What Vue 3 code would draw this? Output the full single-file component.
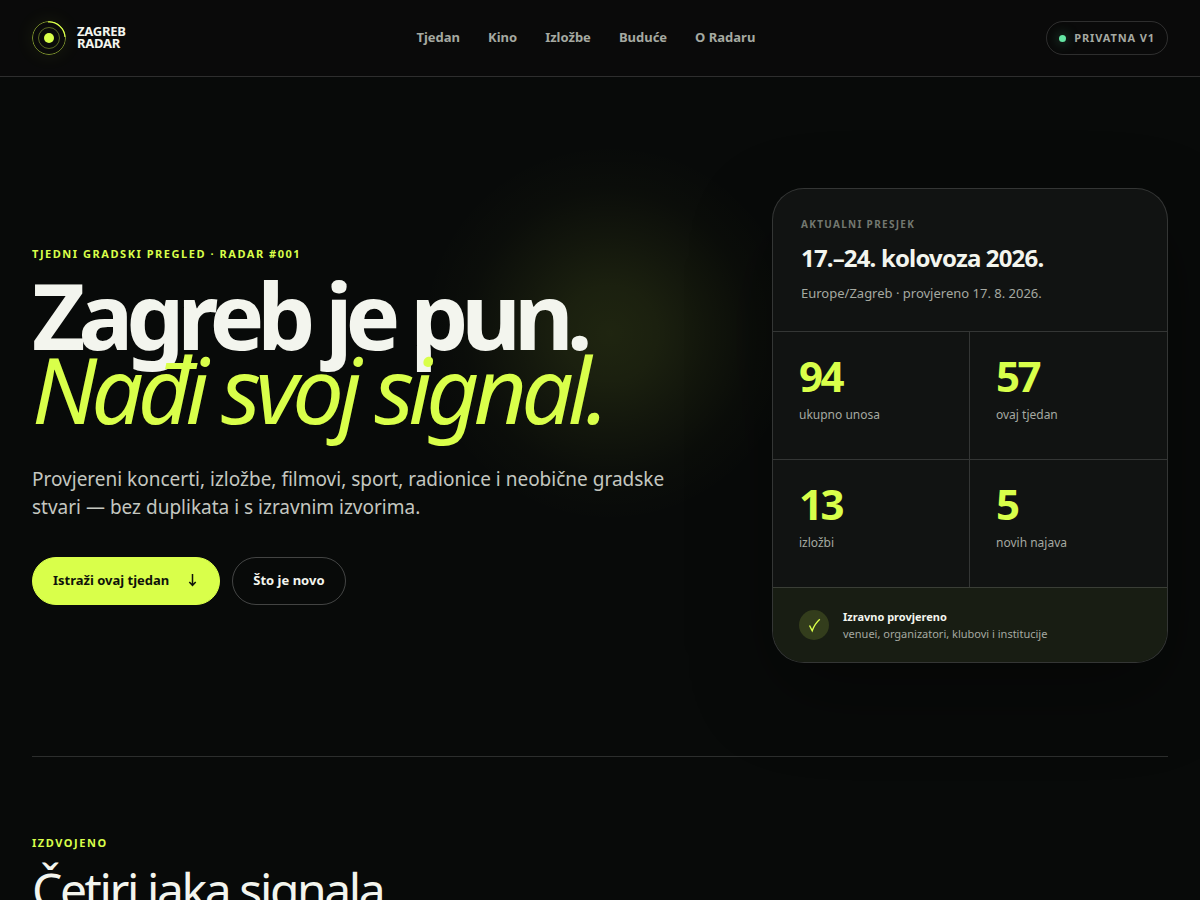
<script setup>
const links = [
  { label: 'Tjedan', href: '#tjedan' },
  { label: 'Kino', href: '#kino' },
  { label: 'Izložbe', href: '#izlozbe' },
  { label: 'Buduće', href: '#buduce' },
  { label: 'O Radaru', href: '#o-radaru' },
]

const stats = [
  { value: 94, label: 'ukupno unosa' },
  { value: 57, label: 'ovaj tjedan' },
  { value: 13, label: 'izložbi' },
  { value: 5, label: 'novih najava' },
]
</script>

<template>
  <div class="page">
    <header class="topbar">
      <a class="brand" href="#vrh">
        <svg class="mark" viewBox="0 0 34 34" aria-hidden="true">
          <circle class="ring" cx="17" cy="17" r="16.5" />
          <circle class="ring inner" cx="17" cy="17" r="10.5" />
          <path class="sweep" d="M16 1A16 16 0 0 1 33 16" />
          <circle class="core" cx="17" cy="17" r="5" />
        </svg>
        <span class="brand-name">ZAGREB<br />RADAR</span>
      </a>
      <nav class="nav" aria-label="Glavna navigacija">
        <a v-for="link in links" :key="link.href" :href="link.href">{{ link.label }}</a>
      </nav>
      <div class="status"><span class="status-dot"></span>PRIVATNA V1</div>
    </header>

    <main class="content">
      <section id="vrh" class="hero">
        <div class="intro">
          <p class="eyebrow">TJEDNI GRADSKI PREGLED · RADAR #001</p>
          <h1>Zagreb je pun.<br /><em>Nađi svoj signal.</em></h1>
          <p class="lead">
            Provjereni koncerti, izložbe, filmovi, sport, radionice i neobične gradske stvari — bez
            duplikata i s izravnim izvorima.
          </p>
          <div class="actions">
            <a class="button primary" href="#tjedan">
              Istraži ovaj tjedan
              <svg class="arrow" viewBox="0 0 12 14" aria-hidden="true">
                <path d="M5.5 1V12M2.3 9L5.5 12.3L8.7 9" />
              </svg>
            </a>
            <a class="button" href="#novo">Što je novo</a>
          </div>
        </div>

        <aside class="card" aria-label="Aktualni presjek">
          <div class="card-head">
            <p class="card-label">AKTUALNI PRESJEK</p>
            <h2>17.–24. kolovoza 2026.</h2>
            <p class="card-meta">Europe/Zagreb · provjereno 17. 8. 2026.</p>
          </div>
          <div class="stats">
            <div v-for="stat in stats" :key="stat.label" class="stat">
              <strong>{{ stat.value }}</strong>
              <span>{{ stat.label }}</span>
            </div>
          </div>
          <div class="card-foot">
            <svg class="check" viewBox="0 0 30 30" aria-hidden="true">
              <circle cx="15" cy="15" r="15" />
              <path d="M10.5 15.5L13.2 20.8C14.6 16.6 17 12.6 20.8 9.2" />
            </svg>
            <p><strong>Izravno provjereno</strong><br />venuei, organizatori, klubovi i institucije</p>
          </div>
        </aside>
      </section>

      <section class="featured">
        <p class="eyebrow">IZDVOJENO</p>
        <h2>Četiri jaka signala</h2>
      </section>
    </main>
  </div>
</template>

<style>
body {
  margin: 0;
  background: #080a09;
}
</style>

<style scoped>
.page {
  --lime: #d9ff4a;
  --paper: #f3f5ee;
  --line: rgba(255, 255, 255, 0.15);
  height: 100vh;
  overflow: hidden;
  background: #080a09;
  color: var(--paper);
  font-family: "Noto Sans", sans-serif;
}

.page * {
  box-sizing: border-box;
}

p,
h1,
h2 {
  margin: 0;
}

a {
  color: inherit;
  text-decoration: none;
}

.topbar {
  display: flex;
  align-items: center;
  justify-content: space-between;
  height: 77px;
  padding: 0 32px;
  background: #0a0a0a;
  border-bottom: 1px solid var(--line);
}

.brand {
  display: flex;
  align-items: center;
  gap: 11px;
}

.mark {
  width: 34px;
  height: 34px;
  border-radius: 50%;
  box-shadow: 0 0 20px rgba(217, 255, 74, 0.08);
}

.ring {
  fill: none;
  stroke: var(--lime);
  stroke-opacity: 0.55;
}

.ring.inner {
  stroke-opacity: 0.38;
}

.sweep {
  fill: none;
  stroke: var(--lime);
  stroke-width: 1.2;
}

.core {
  fill: var(--lime);
}

.brand-name {
  padding-bottom: 2px;
  font-size: 13px;
  font-weight: 700;
  line-height: 12px;
  letter-spacing: -0.02em;
}

.nav {
  display: flex;
  gap: 28px;
  padding-bottom: 2px;
  color: #a5a9a1;
  font-size: 13px;
  font-weight: 700;
  line-height: 18px;
}

.status {
  display: flex;
  align-items: center;
  gap: 8px;
  height: 34px;
  padding: 0 12px;
  border: 1px solid var(--line);
  border-radius: 17px;
  color: #a5a9a1;
  font-size: 11px;
  font-weight: 700;
  line-height: 16px;
  letter-spacing: 0.08em;
}

.status-dot {
  width: 7px;
  height: 7px;
  border-radius: 50%;
  background: #65e6a4;
  box-shadow: 0 0 12px rgba(101, 230, 164, 0.5);
}

.content {
  padding: 0 32px;
}

.hero {
  position: relative;
  display: grid;
  grid-template-columns: 5fr 3fr;
  gap: 80px;
  align-items: center;
  min-height: 680px;
  padding: 100px 0 82px;
  border-bottom: 1px solid var(--line);
}

.hero::before {
  content: "";
  position: absolute;
  top: 66px;
  left: 50%;
  width: 380px;
  height: 380px;
  margin-left: -180px;
  background: radial-gradient(
    closest-side,
    rgba(217, 255, 74, 0.11),
    rgba(217, 255, 74, 0.09) 25%,
    rgba(217, 255, 74, 0.05) 50%,
    rgba(217, 255, 74, 0.014) 75%,
    transparent
  );
}

.intro,
.card {
  position: relative;
}

.eyebrow {
  color: var(--lime);
  font-size: 11px;
  font-weight: 700;
  line-height: 16px;
  letter-spacing: 0.14em;
}

h1 {
  margin-top: 16px;
  font-size: 92px;
  font-weight: 700;
  line-height: 74px;
  letter-spacing: -0.077em;
}

h1 em {
  color: var(--lime);
  font-weight: 400;
  letter-spacing: -0.063em;
}

.lead {
  margin-top: 39px;
  max-width: 640px;
  color: #c4c7c0;
  font-size: 19px;
  line-height: 28px;
}

.actions {
  display: flex;
  gap: 12px;
  margin-top: 36px;
}

.button {
  display: flex;
  align-items: center;
  gap: 18px;
  height: 48px;
  padding: 0 20px 2px;
  border: 1px solid rgba(255, 255, 255, 0.24);
  border-radius: 24px;
  font-size: 13px;
  font-weight: 700;
}

.button.primary {
  border-color: var(--lime);
  background: var(--lime);
  color: #10130a;
}

.arrow {
  width: 12px;
  height: 14px;
  fill: none;
  stroke: currentColor;
  stroke-width: 1.5;
}

.card {
  overflow: hidden;
  border: 1px solid var(--line);
  border-radius: 32px;
  background: #111312;
  box-shadow: 0 30px 80px rgba(0, 0, 0, 0.35);
}

.card-head {
  padding: 28px;
}

.card-label {
  color: #737870;
  font-size: 10px;
  font-weight: 700;
  line-height: 14px;
  letter-spacing: 0.13em;
}

.card-head h2 {
  margin-top: 10px;
  font-size: 24px;
  font-weight: 700;
  line-height: 34px;
  letter-spacing: -0.035em;
}

.card-meta {
  margin-top: 9px;
  color: #a5a9a1;
  font-size: 13px;
  line-height: 19px;
}

.stats {
  display: grid;
  grid-template-columns: 1fr 1fr;
  grid-auto-rows: 1fr;
  min-height: 256px;
}

.stat {
  padding: 24px 26px;
  border-top: 1px solid var(--line);
}

.stat:nth-child(odd) {
  border-right: 1px solid var(--line);
}

.stat strong,
.stat span {
  display: block;
}

.stat strong {
  color: var(--lime);
  font-size: 42px;
  line-height: 40px;
  letter-spacing: -0.06em;
}

.stat span {
  margin-top: 10px;
  color: #a5a9a1;
  font-size: 12px;
  line-height: 17px;
}

.card-foot {
  display: flex;
  align-items: center;
  gap: 14px;
  padding: 20px 26px;
  border-top: 1px solid var(--line);
  background: #181d13;
  color: #a5a9a1;
  font-size: 11px;
  line-height: 17px;
}

.card-foot strong {
  color: var(--paper);
}

.check {
  width: 30px;
  height: 30px;
}

.check circle {
  fill: #333d1c;
}

.check path {
  fill: none;
  stroke: var(--lime);
  stroke-width: 1.4;
}

.featured {
  padding-top: 78px;
}

.featured h2 {
  margin-top: 13px;
  font-size: 48px;
  font-weight: 400;
  line-height: 52px;
  letter-spacing: -0.05em;
}
</style>
